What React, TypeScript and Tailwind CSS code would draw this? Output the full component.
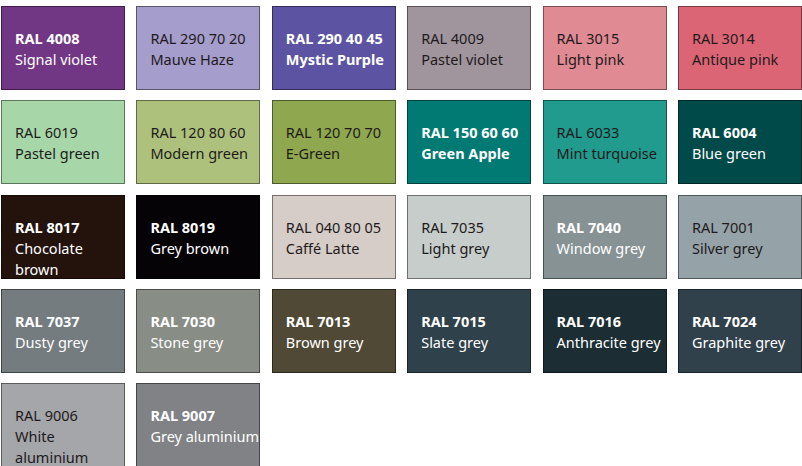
const swatches: { code: string; name: string; bg: string; light?: boolean; bold?: boolean }[] = [
  { code: "RAL 4008", name: "Signal violet", bg: "bg-[#713785]", light: true },
  { code: "RAL 290 70 20", name: "Mauve Haze", bg: "bg-[#a59dcb]" },
  { code: "RAL 290 40 45", name: "Mystic Purple", bg: "bg-[#5c54a3]", light: true, bold: true },
  { code: "RAL 4009", name: "Pastel violet", bg: "bg-[#a1959d]" },
  { code: "RAL 3015", name: "Light pink", bg: "bg-[#e08a93]" },
  { code: "RAL 3014", name: "Antique pink", bg: "bg-[#dc6575]" },
  { code: "RAL 6019", name: "Pastel green", bg: "bg-[#a7d7a9]" },
  { code: "RAL 120 80 60", name: "Modern green", bg: "bg-[#adc17d]" },
  { code: "RAL 120 70 70", name: "E-Green", bg: "bg-[#8fa74f]" },
  { code: "RAL 150 60 60", name: "Green Apple", bg: "bg-[#007a72]", light: true, bold: true },
  { code: "RAL 6033", name: "Mint turquoise", bg: "bg-[#219b8d]" },
  { code: "RAL 6004", name: "Blue green", bg: "bg-[#014a4a]", light: true },
  { code: "RAL 8017", name: "Chocolate brown", bg: "bg-[#24120d]", light: true },
  { code: "RAL 8019", name: "Grey brown", bg: "bg-[#060307]", light: true },
  { code: "RAL 040 80 05", name: "Caffé Latte", bg: "bg-[#d6cdc8]" },
  { code: "RAL 7035", name: "Light grey", bg: "bg-[#c7cdca]" },
  { code: "RAL 7040", name: "Window grey", bg: "bg-[#869294]", light: true },
  { code: "RAL 7001", name: "Silver grey", bg: "bg-[#95a2a7]" },
  { code: "RAL 7037", name: "Dusty grey", bg: "bg-[#747c7f]", light: true },
  { code: "RAL 7030", name: "Stone grey", bg: "bg-[#888d86]", light: true },
  { code: "RAL 7013", name: "Brown grey", bg: "bg-[#4f4936]", light: true },
  { code: "RAL 7015", name: "Slate grey", bg: "bg-[#2f414a]", light: true },
  { code: "RAL 7016", name: "Anthracite grey", bg: "bg-[#1c2d33]", light: true },
  { code: "RAL 7024", name: "Graphite grey", bg: "bg-[#31414c]", light: true },
  { code: "RAL 9006", name: "White aluminium", bg: "bg-[#a5a6a9]" },
  { code: "RAL 9007", name: "Grey aluminium", bg: "bg-[#818286]", light: true },
];

export default function App() {
  return (
    <div className="w-[802px] h-[466px] bg-white pt-[6px] font-['Lato','Liberation_Sans',sans-serif]">
      <div className="grid grid-cols-[repeat(6,124px)] justify-between gap-y-[10.25px] pl-px">
        {swatches.map((s) => (
          <div
            key={s.code}
            className={`h-[84px] border border-black/45 pl-[13px] pt-[21px] text-[14.5px] leading-[21px] ${s.bg} ${
              s.light ? "text-white" : "text-[#1e1a1c]"
            }`}
          >
            <div className={s.light ? "font-bold" : ""}>{s.code}</div>
            <div className={s.bold ? "font-bold" : ""}>{s.name}</div>
          </div>
        ))}
      </div>
    </div>
  );
}
